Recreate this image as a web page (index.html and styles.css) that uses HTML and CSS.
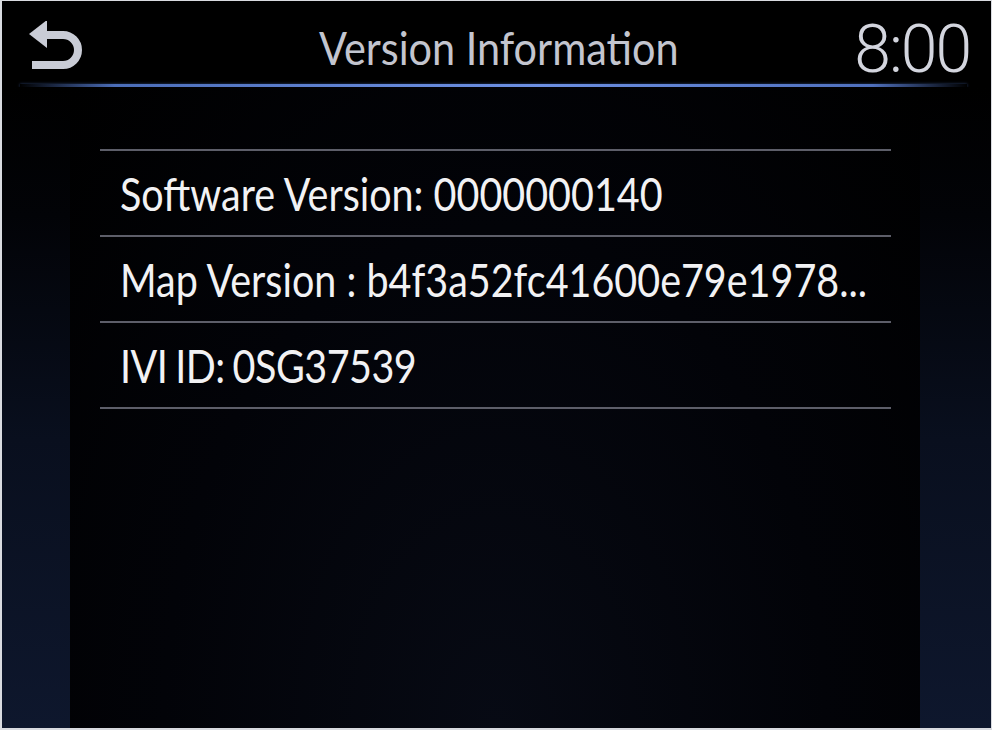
FILE: index.html
```html
<!DOCTYPE html>
<html lang="en">
<head>
<meta charset="utf-8">
<title>Version Information</title>
<link rel="stylesheet" href="styles.css">
</head>
<body>
<div class="screen">
  <header class="header">
    <div class="header-row">
      <button class="back" aria-label="Back">
        <svg width="60" height="60" viewBox="0 0 60 60">
          <path d="M3 13 L21 -1 L21 27 Z" fill="#c9ccd6"/>
          <path d="M18 14 H37 A15 15 0 0 1 37 44 H6" fill="none" stroke="#c9ccd6" stroke-width="8"/>
        </svg>
      </button>
      <h1 class="title"><span class="cond-title">Version Information</span></h1>
      <div class="clock">8:00</div>
    </div>
    <div class="accent"></div>
  </header>
  <div class="body">
    <aside class="side side-left"></aside>
    <main class="center">
      <ul class="list">
        <li class="row"><span class="cond">Software Version: 0000000140</span></li>
        <li class="row"><span class="cond">Map Version : b4f3a52fc41600e79e1978...</span></li>
        <li class="row"><span class="cond tight">IVI ID: 0SG37539</span></li>
      </ul>
    </main>
    <aside class="side side-right"></aside>
  </div>
</div>
</body>
</html>
```

FILE: styles.css
```css
html, body {
  margin: 0;
  padding: 0;
}
body {
  background: #d9dbe0;
  width: 992px;
  height: 730px;
  overflow: hidden;
}
.screen {
  margin: 1px 1px 2px 2px;
  width: 989px;
  height: 727px;
  background: #000;
  display: flex;
  flex-direction: column;
  font-family: Lato, "Open Sans", sans-serif;
  overflow: hidden;
}
.header {
  flex: 0 0 auto;
  padding-top: 16px;
}
.header-row {
  display: grid;
  grid-template-columns: 1fr auto 1fr;
  align-items: center;
  height: 64px;
  padding: 0 19px 0 24px;
}
.back {
  justify-self: start;
  background: none;
  border: 0;
  padding: 0;
  width: 60px;
  height: 60px;
  display: flex;
  align-items: center;
  margin-top: 2px;
}
.back svg {
  display: block;
}
.title {
  margin: 0 0 5px 0;
  font-weight: normal;
  font-size: 46px;
  color: #c3c5cf;
  line-height: 1;
  white-space: nowrap;
}
.cond-title {
  display: inline-block;
  transform: scaleX(0.9);
  transform-origin: center center;
}
.clock {
  justify-self: end;
  font-family: Roboto, sans-serif;
  font-weight: 300;
  font-size: 66px;
  letter-spacing: -2px;
  color: #d3d5de;
  line-height: 1;
  padding-right: 2px;
}
.accent {
  margin: 3px 24px 0 18px;
  height: 3px;
  background: linear-gradient(90deg, rgba(70,100,170,0) 0%, #4b6db8 10%, #6487d8 40%, #6c8fe2 55%, #4f70bd 90%, rgba(70,100,170,0) 100%);
  box-shadow: 0 0 3px rgba(90,130,220,0.5);
}
.body {
  flex: 1 1 auto;
  display: flex;
  min-height: 0;
}
.side {
  flex: 0 0 auto;
  background: linear-gradient(180deg, #000 0%, #020307 20%, #090f1e 55%, #0e172d 100%);
}
.side-left {
  width: 68px;
}
.side-right {
  width: 71px;
}
.center {
  flex: 1 1 0;
  min-width: 0;
  background: radial-gradient(ellipse at 50% 100%, #070a14 0%, #020308 55%, #000 100%);
  padding-top: 62px;
}
.list {
  list-style: none;
  margin: 0 29px 0 30px;
  padding: 0;
  border-top: 2px solid #5d5e69;
}
.row {
  height: 84px;
  border-bottom: 2px solid #5d5e69;
  display: flex;
  align-items: center;
  padding-left: 20px;
  font-size: 47px;
  color: #f2f2f4;
  white-space: nowrap;
  overflow: visible;
}
.cond {
  display: inline-block;
  transform: scaleX(0.84);
  transform-origin: left center;
}
.tight {
  word-spacing: -2px;
  letter-spacing: -0.6px;
}
```
